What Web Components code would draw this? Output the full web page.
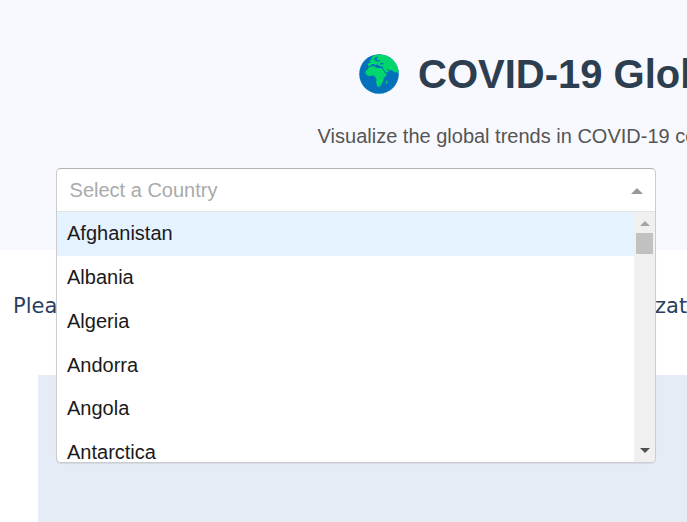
<!DOCTYPE html>
<html lang="en"><head><meta charset="utf-8"><title>COVID-19 Dashboard</title>
<style>html,body{margin:0;height:100%;overflow:hidden;background:#fff;font-family:"Liberation Sans",Arial,sans-serif}</style></head>
<body>
<dashboard-page></dashboard-page>
<script>
const define=(name,html,init)=>customElements.define(name,class extends HTMLElement{
  constructor(){super();const t=document.createElement('template');t.innerHTML=html;
    this.attachShadow({mode:'open'}).append(t.content.cloneNode(true));if(init)init(this.shadowRoot,this);}
});
define('globe-icon',`<style>:host{display:block;width:40px;height:40px;flex:none}svg{display:block}</style>
<svg width="40" height="40" viewBox="0 0 40 40"><defs><clipPath id="c"><circle cx="20" cy="20" r="19.8"/></clipPath></defs>
<circle cx="20" cy="20" r="19.8" fill="#0271b9"/>
<g clip-path="url(#c)" fill="#00d66b">
<path d="M12 4.5 14 2l5-2h12l9 8v10l-1 1.5-1-2-1 1-1 .3-1.8-1.8-2.2-1.3-1.6 1.2-3.3 1.8-1.2-1.2-1.8-3.5-.3-1.6-3-.1-1.4-1.2-1.8-.9-1.2 1.1-1.2-1.4-2.2.2-1.3 1.5-2.7.4-.4-2.6 2.7-.6.2-1.4-1.2-.5.8-1 1.6-.2Z"/>
<path d="m11.2 12.6 4.6-.3 1 1.5 2.5.4 3.8-.2 1.6 3.2 1.4 2.4 2 .2-1.1 2-2.6 2.6-.1 3-1.4 1.3-.5 2-1.7 1.9-2.2.1-1-2.6-.4-2.4.5-2.3-1.5-2.3-.7-1.3-2.4-.2-3 .6-2.3-1.3-1.3-1.8.3-2.4 2.2-1.3.5-1.9Z"/>
<path d="m27.2 27 1.3-.5v2.3l-.8 1.2-.9-.5Z"/></g>
<path fill="#0271b9" d="m16.7 3.2 2-.7.2 1.1-1.2 1 .2 1.5 3.2.1v1.1l-3 .3-1.7-.8-.8-1.3-1.4-.3ZM21 9.4l1.4-.6 1.5.5 1.2.4-.1.6-3.8.1ZM28 15l2.6 1.3-.6.6-2-1Z"/></svg>`);
define('page-hero',`<style>:host{display:flex;flex-direction:column;box-sizing:border-box;height:249.5px;padding-top:51px;background:#f8f9fe;white-space:nowrap}
.title{display:flex;align-items:center;height:46px;margin-left:359px;gap:19px}h1{font-size:40px;line-height:46px;margin:0;color:#2c3e50}
p{font-size:20px;line-height:24px;margin:27px 0 0 317.6px;color:#555}</style>
<div class="title"><globe-icon></globe-icon><h1><slot name="title"></slot></h1></div><p><slot name="lead"></slot></p>`);
define('plot-hint',`<style>:host{display:flex;box-sizing:border-box;justify-content:space-between;height:125.5px;padding:42px 0 0 13px;font:21px/28px "DejaVu Sans",Verdana,sans-serif;color:#2a3f5f}
.end{width:32px;overflow:hidden}</style><span>Plea</span><span class="end">zat</span>`);
define('plot-area',`<style>:host{display:block;margin-left:38px;height:150px;background:#e5ecf6}</style>`);
define('country-option',`<style>:host{display:block;box-sizing:border-box;height:43.8px;padding:9.2px 10px 10.6px;font-size:20px;line-height:24px;color:#1a1a1a}
:host([focused]){background:#e5f2ff}</style><slot></slot>`);
define('menu-scrollbar',`<style>:host{display:flex;flex-direction:column;align-items:center;justify-content:space-between;box-sizing:border-box;width:21px;background:#f0f0f0;padding:9px 0 9px}
.top{display:flex;flex-direction:column;align-items:center;gap:7px}.thumb{width:17px;height:21px;background:#c1c1c1}svg{display:block}</style>
<div class="top"><svg width="10" height="5"><path d="M0 5 5 0l5 5Z" fill="#a3a3a3"/></svg><div class="thumb"></div></div>
<svg width="10" height="5"><path d="m0 0 5 5 5-5Z" fill="#505050"/></svg>`);
define('country-select',`<style>:host{position:absolute;left:56px;top:168px;width:600px;height:295px;box-sizing:border-box;display:flex;flex-direction:column;border:1px solid #ccc;border-top-color:#b3b3b3;border-radius:5px;background:#fff;overflow:hidden;box-shadow:0 1px 1px rgba(0,0,0,.08)}
.control{display:flex;align-items:center;justify-content:space-between;height:42px;flex:none;padding:0 12px 0 12.6px;border-bottom:1px solid #e0e3e6;font-size:20px;color:#aaa}
.menu{display:flex;flex:1;min-height:0}.list{flex:1;overflow:hidden}svg{display:block;margin-top:2px}</style>
<div class="control"><span>Select a Country</span><svg width="12" height="6"><path d="M0 6 6 0l6 6Z" fill="#999"/></svg></div>
<div class="menu"><div class="list"></div><menu-scrollbar></menu-scrollbar></div>`,r=>{
  ['Afghanistan','Albania','Algeria','Andorra','Angola','Antarctica'].forEach((n,i)=>{const o=document.createElement('country-option');o.textContent=n;if(!i)o.setAttribute('focused','');r.querySelector('.list').append(o);});
});
define('dashboard-page',`<style>:host{display:block;width:687px;height:522px;overflow:hidden;position:relative}</style>
<page-hero><span slot="title">COVID-19 Glob</span><span slot="lead">Visualize the global trends in COVID-19 co</span></page-hero>
<plot-hint></plot-hint><plot-area></plot-area><country-select></country-select>`);
</script></body></html>
